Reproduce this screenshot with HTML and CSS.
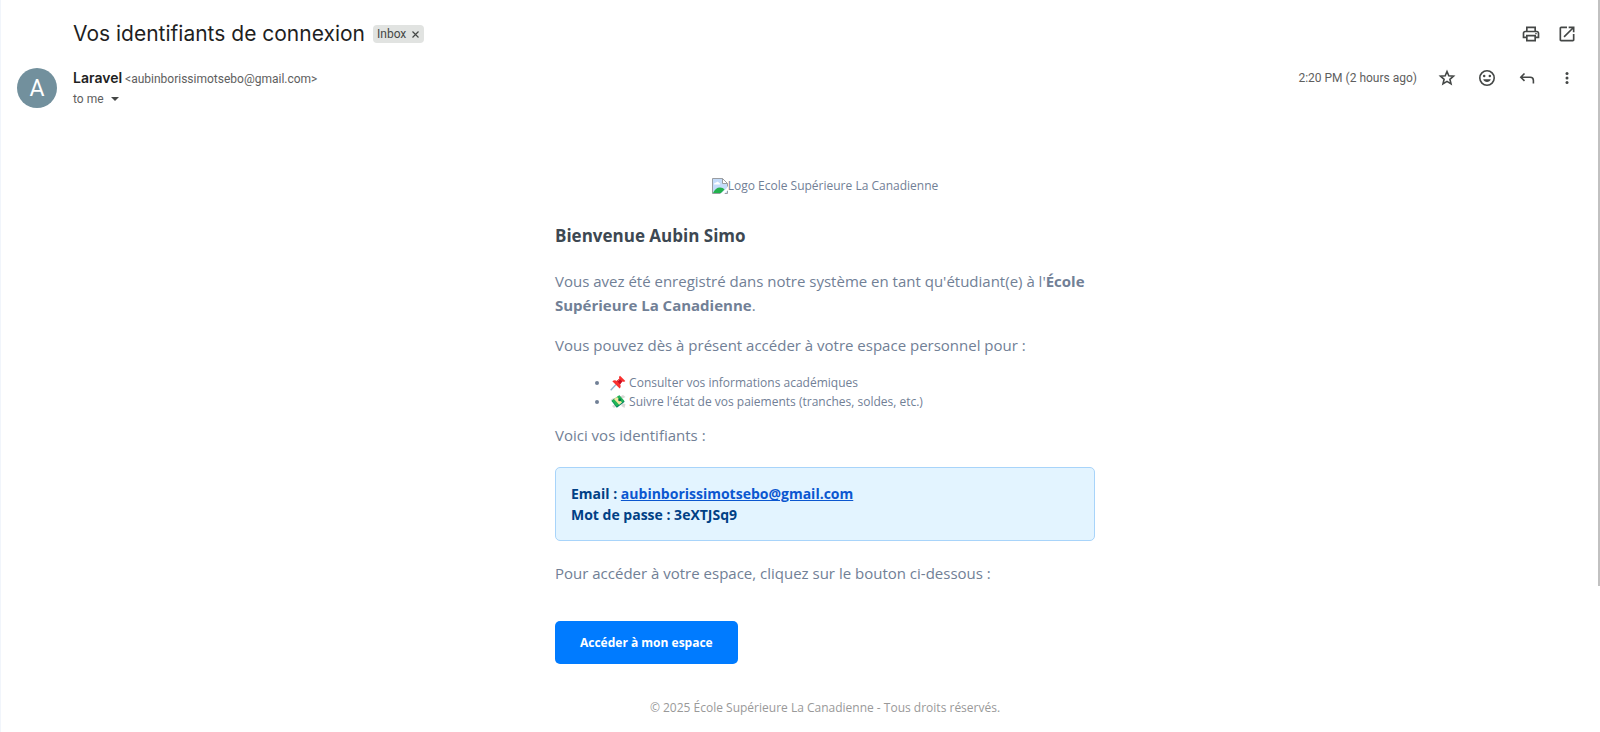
FILE: index.html
```html
<!DOCTYPE html>
<html lang="fr">
<head>
<meta charset="utf-8">
<meta name="viewport" content="width=device-width, initial-scale=1">
<title>Vos identifiants de connexion</title>
<link rel="stylesheet" href="styles.css">
</head>
<body>
<main class="mail">
  <header class="subject-bar">
    <h1 class="subject">Vos identifiants de connexion</h1>
    <span class="label">Inbox
      <button class="label-remove" type="button" aria-label="Remove label Inbox"><svg width="7" height="7" viewBox="0 0 7 7"><path d="M.5.5l6 6M6.5.5l-6 6" stroke="#444746" stroke-width="1.2"/></svg></button>
    </span>
    <div class="actions">
      <button class="icon" type="button" aria-label="Print all"><svg width="20" height="20" viewBox="0 0 24 24"><path d="M19 8h-1V3H6v5H5c-1.660 0-3 1.340-3 3v6h4v4h12v-4h4v-6c0-1.660-1.340-3-3-3zM8 5h8v3H8V5zm8 14H8v-4h8v4zm2-4v-2H6v2H4v-4c0-.55.45-1 1-1h14c.55 0 1 .45 1 1v4h-2z"/><circle cx="18" cy="11.500" r="1"/></svg></button>
      <button class="icon" type="button" aria-label="In new window"><svg width="20" height="20" viewBox="0 0 24 24"><path d="M19 19H5V5h7V3H5c-1.110 0-2 .9-2 2v14c0 1.100.89 2 2 2h14c1.100 0 2-.9 2-2v-7h-2v7zM14 3v2h3.590l-9.830 9.830 1.410 1.410L19 6.410V10h2V3h-7z"/></svg></button>
    </div>
  </header>

  <section class="sender-bar">
    <div class="avatar" aria-hidden="true">A</div>
    <div class="sender">
      <div class="from"><span class="name">Laravel</span> <span class="address">&lt;aubinborissimotsebo@gmail.com&gt;</span></div>
      <div class="to">to me <button class="details" type="button" aria-label="Show details"><svg width="8" height="4" viewBox="0 0 8 4"><path d="M0 0h8L4 4z" fill="#444746"/></svg></button></div>
    </div>
    <div class="meta">
      <time class="date">2:20 PM (2 hours ago)</time>
      <div class="message-actions">
        <button class="icon" type="button" aria-label="Star"><svg width="20" height="20" viewBox="0 0 20 20"><path d="M10 3.500l1.800 4.300 4.700.4-3.600 3.100 1.100 4.600-4-2.500-4 2.500 1.100-4.600-3.600-3.100 4.700-.4z" fill="none" stroke="#444746" stroke-width="1.600"/></svg></button>
        <button class="icon" type="button" aria-label="Add reaction"><svg width="20" height="20" viewBox="0 0 20 20"><circle cx="10" cy="10" r="7.200" fill="none" stroke="#444746" stroke-width="1.600"/><circle cx="7.200" cy="8" r="1.250"/><circle cx="12.800" cy="8" r="1.250"/><path d="M6.200 11.200h7.600c-.6 1.800-2 2.800-3.800 2.800s-3.200-1-3.800-2.800z"/></svg></button>
        <button class="icon" type="button" aria-label="Reply"><svg width="20" height="20" viewBox="0 0 20 20"><path d="M7.500 5.500L3.800 9.200l3.700 3.700M4 9.200h9.200c1.900 0 3.200 1.300 3.200 3.200v3.100" fill="none" stroke="#444746" stroke-width="1.600"/></svg></button>
        <button class="icon" type="button" aria-label="More"><svg width="20" height="20" viewBox="0 0 20 20"><circle cx="10" cy="5.500" r="1.500"/><circle cx="10" cy="10" r="1.500"/><circle cx="10" cy="14.500" r="1.500"/></svg></button>
      </div>
    </div>
  </section>

  <div class="message-body">
    <article class="content">
      <div class="logo">
        <svg width="16" height="16" viewBox="0 0 16 16" aria-hidden="true"><path d="M.5.5h10l5 5v10H.5z" fill="#c4dcfa"/><path d="M2 6.500c0-1.600 1.200-2 2-1.700.6-1.500 2.700-1.300 3 .2 1.300 0 1.500 1.500.6 1.500z" fill="#fff"/><path d="M1 15c1.500-3.500 4-5.500 7-5.500 2 0 3.500.8 4.500 2L9 15z" fill="#23b14d"/><path d="M10.500.5v5h5z" fill="#fff"/><path d="M.5 15.500V.5h10l5 5v3M10.500.5v5h5M.5 15.500h8M15.500 12.500v3h-3" fill="none" stroke="#9a9da1"/><path d="M8.500 16l7.500-7v3l-4 4z" fill="#fff"/></svg><span>Logo Ecole Supérieure La Canadienne</span>
      </div>
      <h2 class="greeting">Bienvenue Aubin Simo</h2>
      <p class="text">Vous avez été enregistré dans notre système en tant qu'étudiant(e) à l'<strong>École Supérieure La Canadienne</strong>.</p>
      <p class="text">Vous pouvez dès à présent accéder à votre espace personnel pour :</p>
      <ul class="features">
        <li><svg class="emoji" width="16" height="16" viewBox="0 0 16 16" aria-hidden="true"><path d="M6 9.500L.7 15.200" stroke="#8fb4cc" stroke-width="1.300"/><path d="M2.300 6.200c1.500-1.200 3.300-1.100 4.600-.3l2.400-2.100c-.5-1.300-.2-2.400.7-3.100l5.300 5.200c-.8 1-2 1.200-3.100.7l-2.100 2.600c.9 1.500.8 3.100-.4 4.400z" fill="#f8312f"/><path d="M6.900 5.900l2.400-2.100 2.900 2.800-2.100 2.600z" fill="#ca0b22"/><path d="M7.700 5.900l1.800-1.500" stroke="#ff7a65"/></svg> Consulter vos informations académiques</li>
        <li><svg class="emoji" width="16" height="16" viewBox="0 0 16 16" aria-hidden="true"><path d="M.5 6l3-2 3 2-3 2zM9 3l4-2 2.500 2-3 1.500zM2 12l3-2 2 2-3 2zM11.500 9l4 1-1 4-3-2z" fill="#d9d9d6"/><path d="M1.500 7L9.300 1.500l5.400 6.300-7.900 6z" fill="#008463"/><path d="M1.700 6.500L9.300 1.200l5 5.600-7.700 5.700z" fill="#22b455"/><path d="M4 5l3-2.100 5 5.700-2.900 2.200z" fill="#f4e6a0"/><circle cx="9.700" cy="5.700" r="1.500" fill="#007a4d"/></svg> Suivre l'état de vos paiements (tranches, soldes, etc.)</li>
      </ul>
      <p class="text">Voici vos identifiants :</p>
      <div class="credentials">
        <div>Email : <a href="mailto:aubinborissimotsebo@gmail.com">aubinborissimotsebo@gmail.com</a></div>
        <div>Mot de passe : 3eXTJSq9</div>
      </div>
      <p class="text">Pour accéder à votre espace, cliquez sur le bouton ci-dessous :</p>
      <a class="cta" href="#espace">Accéder à mon espace</a>
      <footer class="legal">© 2025 École Supérieure La Canadienne - Tous droits réservés.</footer>
    </article>
  </div>
</main>
<div class="scroll-thumb"></div>
</body>
</html>
```
FILE: styles.css
```css
* { box-sizing: border-box; }

body {
  margin: 0;
  min-height: 100vh;
  background: #fff;
  border-left: 1px solid #f1f5fb;
  color: #1f1f1f;
  font-family: Roboto, "Liberation Sans", sans-serif;
  font-size: 12px;
}

button {
  border: 0;
  padding: 0;
  background: none;
  color: inherit;
  font: inherit;
  cursor: pointer;
}

.mail { padding: 20px 23px 12px 16px; }

.subject-bar {
  display: flex;
  align-items: center;
  gap: 8px;
  padding-left: 56px;
  height: 28px;
}

.subject {
  margin: 0;
  font-family: Inter, sans-serif;
  font-size: 21px;
  font-weight: 400;
  line-height: 28px;
}

.label {
  display: flex;
  align-items: center;
  gap: 6px;
  height: 18px;
  padding: 0 5px 0 4px;
  border-radius: 4px;
  background: #e1e3e1;
  color: #444746;
}

.label-remove { display: flex; }

.actions {
  display: flex;
  gap: 16px;
  margin-left: auto;
}

.icon {
  display: flex;
  width: 20px;
  height: 20px;
  color: #444746;
  fill: #444746;
}

.sender-bar {
  display: flex;
  align-items: flex-start;
  gap: 16px;
  margin-top: 20px;
}

.avatar {
  display: grid;
  place-items: center;
  width: 40px;
  height: 40px;
  border-radius: 50%;
  background: #72909d;
  color: #fff;
  font-size: 23px;
}

.sender { line-height: 20px; color: #5e5e5e; }

.name {
  color: #1f1f1f;
  font-family: Inter, sans-serif;
  font-size: 14px;
  font-weight: 600;
}

.to { display: flex; align-items: center; gap: 7px; }
.details { display: flex; }

.meta {
  display: flex;
  align-items: center;
  gap: 20px;
  height: 20px;
  margin-left: auto;
  color: #5e5e5e;
}

.message-actions { display: flex; gap: 20px; }

.message-body { padding: 67px 0 0 56px; }

.content {
  max-width: 540px;
  margin: 0 auto;
  color: #718096;
  font-family: "Open Sans", "Noto Sans", sans-serif;
  font-size: 12px;
  line-height: 19px;
}

.logo {
  display: flex;
  justify-content: center;
  align-items: center;
}

.greeting {
  margin: 29px 0 21px;
  color: #3d4852;
  font-size: 17px;
  font-weight: 700;
  line-height: 24px;
}

.text {
  margin: 0 0 16px;
  font-size: 15px;
  line-height: 24px;
}

.features { margin: 0 0 12px; padding-left: 55px; }
.emoji { vertical-align: -4px; }

.credentials {
  margin: 20px 0;
  padding: 15px;
  border: 1px solid #a8d4fa;
  border-radius: 5px;
  background: #e3f4ff;
  color: #004085;
  font-size: 14px;
  font-weight: 700;
  line-height: 21px;
}

.credentials a { color: #0b57d0; }

.cta {
  display: inline-block;
  margin-top: 20px;
  padding: 12px 25px;
  border-radius: 5px;
  background: #007bff;
  color: #fff;
  font-weight: 700;
  text-decoration: none;
}

.legal {
  margin-top: 34px;
  color: #999;
  text-align: center;
}

.scroll-thumb {
  position: fixed;
  top: 0;
  right: 0;
  width: 2px;
  height: 80vh;
  background: #c1c1c1;
}
```
